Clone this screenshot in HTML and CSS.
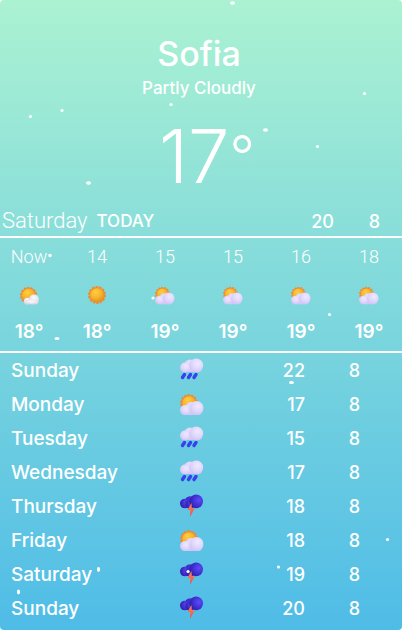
FILE: index.html
```html
<!DOCTYPE html>
<html lang="en">
  <head>
    <meta charset="UTF-8" />
    <meta name="viewport" content="width=device-width, initial-scale=1.0" />
    <title>Sofia Weather</title>
    <link rel="stylesheet" href="styles.css">
  </head>
  <body>
    <!-- Icon sprite -->
    <svg class="sprite" aria-hidden="true">
      <defs>
        <radialGradient id="sun-fill" cx="0.4" cy="0.3" r="0.7">
          <stop offset="0" stop-color="#ffcf3f" />
          <stop offset="0.6" stop-color="#f6b32c" />
          <stop offset="1" stop-color="#dd9526" />
        </radialGradient>
        <radialGradient id="lobe-fill" cx="0.6" cy="0.35" r="0.65">
          <stop offset="0" stop-color="#efe9ff" />
          <stop offset="0.6" stop-color="#e0d7fc" />
          <stop offset="1" stop-color="#d0c5f6" />
        </radialGradient>
        <radialGradient id="white-fill" cx="0.5" cy="0.3" r="0.7">
          <stop offset="0" stop-color="#fafaff" />
          <stop offset="0.6" stop-color="#e6e5ef" />
          <stop offset="1" stop-color="#cfcede" />
        </radialGradient>
        <radialGradient id="storm-fill" cx="0.7" cy="0.4" r="0.7">
          <stop offset="0" stop-color="#5b4cf5" />
          <stop offset="0.6" stop-color="#4030d4" />
          <stop offset="1" stop-color="#2d20a2" />
        </radialGradient>
        <linearGradient id="bolt-fill" x1="0" y1="0" x2="0" y2="1">
          <stop offset="0" stop-color="#ff8a4c" />
          <stop offset="1" stop-color="#ef4a50" />
        </linearGradient>
      </defs>
      <symbol id="sun-disc" viewBox="0 0 24 24">
        <circle cx="12" cy="12" r="10.6" fill="none" stroke="#f18a2e" stroke-width="2.4" stroke-dasharray="3.2 1.56" />
        <circle cx="12" cy="12" r="10.2" fill="#f18a2e" />
        <circle cx="12" cy="12" r="9" fill="url(#sun-fill)" />
      </symbol>
      <symbol id="sunny" viewBox="0 0 24 26">
        <use href="#sun-disc" x="1" y="2" width="22" height="22" />
      </symbol>
      <symbol id="mostly-sunny" viewBox="0 0 24 26">
        <use href="#sun-disc" x="1" y="3" width="21" height="21" />
        <circle cx="10" cy="20.5" r="4.2" fill="url(#white-fill)" />
        <circle cx="18" cy="18.5" r="6" fill="url(#white-fill)" />
        <rect x="7" y="19" width="16" height="5.5" rx="2.7" fill="url(#white-fill)" />
      </symbol>
      <symbol id="partly-cloudy" viewBox="0 0 24 26">
        <use href="#sun-disc" x="0" y="3" width="18" height="18" />
        <rect x="1" y="15" width="21" height="9" rx="4" fill="#d3c9f8" />
        <circle cx="11" cy="17" r="6" fill="url(#lobe-fill)" />
        <circle cx="5" cy="19" r="5" fill="url(#lobe-fill)" />
        <circle cx="16.5" cy="17" r="7" fill="url(#lobe-fill)" />
      </symbol>
      <symbol id="rainy" viewBox="0 0 24 26">
        <path d="M2.5 20.5l2-3M8.5 20.5l2-3M14 20.5l2-3" stroke="#3542ee" stroke-width="3.4" stroke-linecap="round" />
        <rect x="1" y="7" width="21" height="8" rx="4" fill="#d3c9f8" />
        <circle cx="10" cy="8.5" r="6" fill="url(#lobe-fill)" />
        <circle cx="5" cy="10.5" r="5" fill="url(#lobe-fill)" />
        <circle cx="16.2" cy="8.5" r="7" fill="url(#lobe-fill)" />
      </symbol>
      <symbol id="stormy" viewBox="0 0 24 26">
        <circle cx="10" cy="8.5" r="5.2" fill="url(#storm-fill)" />
        <circle cx="4.8" cy="10.5" r="4.8" fill="url(#storm-fill)" />
        <circle cx="10" cy="11" r="4.6" fill="url(#storm-fill)" />
        <circle cx="16.2" cy="8.4" r="6.8" fill="url(#storm-fill)" />
        <path d="M11.5 10L7.4 17h3l-.4 6.8 5-8.6h-3.2z" fill="url(#bolt-fill)" />
      </symbol>
    </svg>

    <main class="weather">
      <header class="current">
        <h1 class="city">Sofia</h1>
        <p class="condition">Partly Cloudly</p>
        <p class="temperature">17<span class="degree">°</span></p>
      </header>

      <section class="today">
        <h2 class="today-day">Saturday</h2>
        <span class="today-label">TODAY</span>
        <span class="today-high">20</span>
        <span class="today-low">8</span>
      </section>

      <section class="hourly">
        <div class="hour">
          <span class="hour-time">Now</span>
          <svg class="hour-icon"><use href="#mostly-sunny" /></svg>
          <span class="hour-temp">18°</span>
        </div>
        <div class="hour">
          <span class="hour-time">14</span>
          <svg class="hour-icon"><use href="#sunny" /></svg>
          <span class="hour-temp">18°</span>
        </div>
        <div class="hour">
          <span class="hour-time">15</span>
          <svg class="hour-icon"><use href="#partly-cloudy" /></svg>
          <span class="hour-temp">19°</span>
        </div>
        <div class="hour">
          <span class="hour-time">15</span>
          <svg class="hour-icon"><use href="#partly-cloudy" /></svg>
          <span class="hour-temp">19°</span>
        </div>
        <div class="hour">
          <span class="hour-time">16</span>
          <svg class="hour-icon"><use href="#partly-cloudy" /></svg>
          <span class="hour-temp">19°</span>
        </div>
        <div class="hour">
          <span class="hour-time">18</span>
          <svg class="hour-icon"><use href="#partly-cloudy" /></svg>
          <span class="hour-temp">19°</span>
        </div>
      </section>

      <section class="daily">
        <table class="daily-table">
          <tr>
            <th class="day" scope="row">Sunday</th>
            <td class="day-sky"><svg class="day-icon"><use href="#rainy" /></svg></td>
            <td class="day-high">22</td>
            <td class="day-low">8</td>
          </tr>
          <tr>
            <th class="day" scope="row">Monday</th>
            <td class="day-sky"><svg class="day-icon"><use href="#partly-cloudy" /></svg></td>
            <td class="day-high">17</td>
            <td class="day-low">8</td>
          </tr>
          <tr>
            <th class="day" scope="row">Tuesday</th>
            <td class="day-sky"><svg class="day-icon"><use href="#rainy" /></svg></td>
            <td class="day-high">15</td>
            <td class="day-low">8</td>
          </tr>
          <tr>
            <th class="day" scope="row">Wednesday</th>
            <td class="day-sky"><svg class="day-icon"><use href="#rainy" /></svg></td>
            <td class="day-high">17</td>
            <td class="day-low">8</td>
          </tr>
          <tr>
            <th class="day" scope="row">Thursday</th>
            <td class="day-sky"><svg class="day-icon"><use href="#stormy" /></svg></td>
            <td class="day-high">18</td>
            <td class="day-low">8</td>
          </tr>
          <tr>
            <th class="day" scope="row">Friday</th>
            <td class="day-sky"><svg class="day-icon"><use href="#partly-cloudy" /></svg></td>
            <td class="day-high">18</td>
            <td class="day-low">8</td>
          </tr>
          <tr>
            <th class="day" scope="row">Saturday</th>
            <td class="day-sky"><svg class="day-icon"><use href="#stormy" /></svg></td>
            <td class="day-high">19</td>
            <td class="day-low">8</td>
          </tr>
          <tr>
            <th class="day" scope="row">Sunday</th>
            <td class="day-sky"><svg class="day-icon"><use href="#stormy" /></svg></td>
            <td class="day-high">20</td>
            <td class="day-low">8</td>
          </tr>
        </table>
      </section>

      <!-- Snowflakes over everything -->
      <svg class="snow" viewBox="0 0 402 630" aria-hidden="true">
        <ellipse cx="232.5" cy="3" rx="2.5" ry="1.8" />
        <circle cx="219" cy="51.5" r="1.7" />
        <circle cx="364.5" cy="93.5" r="1.6" />
        <circle cx="171" cy="104.5" r="1.6" />
        <circle cx="62" cy="110.5" r="1.6" />
        <circle cx="30.5" cy="116.5" r="1.6" />
        <ellipse cx="265.5" cy="130" rx="2.5" ry="1.8" />
        <circle cx="317.5" cy="146.5" r="1.6" />
        <ellipse cx="88.5" cy="183" rx="2.5" ry="1.8" />
        <circle cx="50" cy="255.5" r="1.7" />
        <circle cx="153" cy="298" r="1.6" />
        <circle cx="329.5" cy="314.5" r="1.6" />
        <ellipse cx="57" cy="338.5" rx="2.5" ry="1.6" />
        <ellipse cx="291.5" cy="382.5" rx="2.5" ry="1.6" />
        <circle cx="387.5" cy="539.5" r="1.6" />
        <circle cx="278.5" cy="567" r="1.6" />
        <ellipse cx="98.5" cy="569.5" rx="1.6" ry="2.4" />
        <circle cx="188" cy="571.5" r="1.6" />
        <ellipse cx="18.5" cy="592" rx="1.6" ry="2.4" />
      </svg>
    </main>
  </body>
</html>
```

FILE: styles.css
```css
* {
  box-sizing: border-box;
}
body {
  margin: 0;
  background: white;
  color: white;
  font-family: Inter, "Open Sans", sans-serif;
}
h1,
h2,
p {
  margin: 0;
}
.sprite {
  position: absolute;
  width: 0;
  height: 0;
}
.weather {
  position: relative;
  min-height: 100vh;
  overflow: hidden;
  border-radius: 4px;
  background: linear-gradient(#abf2d2, #4fbce7);
}
.current {
  padding: 32px 4px 0 0;
  text-align: center;
}
.city {
  font-size: 34px;
  font-weight: 500;
  line-height: 44px;
}
.condition {
  margin-top: 2px;
  font-size: 17px;
  font-weight: 500;
  line-height: 20px;
}
.temperature {
  display: flex;
  justify-content: center;
  padding-left: 16px;
  margin-top: 18px;
  font-size: 74px;
  font-weight: 300;
  line-height: 80px;
}
.degree {
  font-size: 56px;
}
.today {
  display: grid;
  grid-template-columns: auto 1fr 40px 46px;
  align-items: center;
  height: 42px;
  padding: 10px 22px 0 2px;
  border-bottom: 2px solid white;
  font-size: 18px;
  font-weight: 500;
}
.today-day {
  margin-right: 9px;
  font-family: Roboto, sans-serif;
  font-size: 22px;
  font-weight: 300;
  line-height: 28px;
}
.today-label {
  font-size: 17px;
}
.today-high,
.today-low {
  text-align: right;
}
.hourly {
  display: grid;
  grid-template-columns: repeat(6, 68px);
  height: 115px;
  padding-top: 7px;
  margin-left: -5px;
  border-bottom: 2px solid white;
  overflow: hidden;
}
.hour {
  display: flex;
  flex-direction: column;
  align-items: center;
}
.hour-time {
  font-family: Roboto, sans-serif;
  font-size: 18px;
  font-weight: 300;
  line-height: 24px;
}
.hour-icon {
  width: 20px;
  height: 22px;
  margin: 15px 0 14px;
}
.hour-temp {
  font-size: 19px;
  font-weight: 600;
  line-height: 24px;
}
.daily {
  padding: 0 42px 4px 11px;
}
.daily-table {
  width: 100%;
  border-collapse: collapse;
  table-layout: fixed;
  font-size: 18px;
}
.daily-table th,
.daily-table td {
  height: 34px;
  padding: 0;
  font-weight: 500;
}
.day {
  font-size: 19px;
  text-align: left;
}
.day-sky {
  width: 24px;
}
.day-icon {
  display: block;
  width: 24px;
  height: 26px;
}
.daily-table .day-high {
  width: 101px;
  text-align: right;
}
.daily-table .day-low {
  width: 55px;
  text-align: right;
}
.snow {
  position: absolute;
  top: 0;
  left: 0;
  width: 100%;
  fill: white;
  pointer-events: none;
}
```
